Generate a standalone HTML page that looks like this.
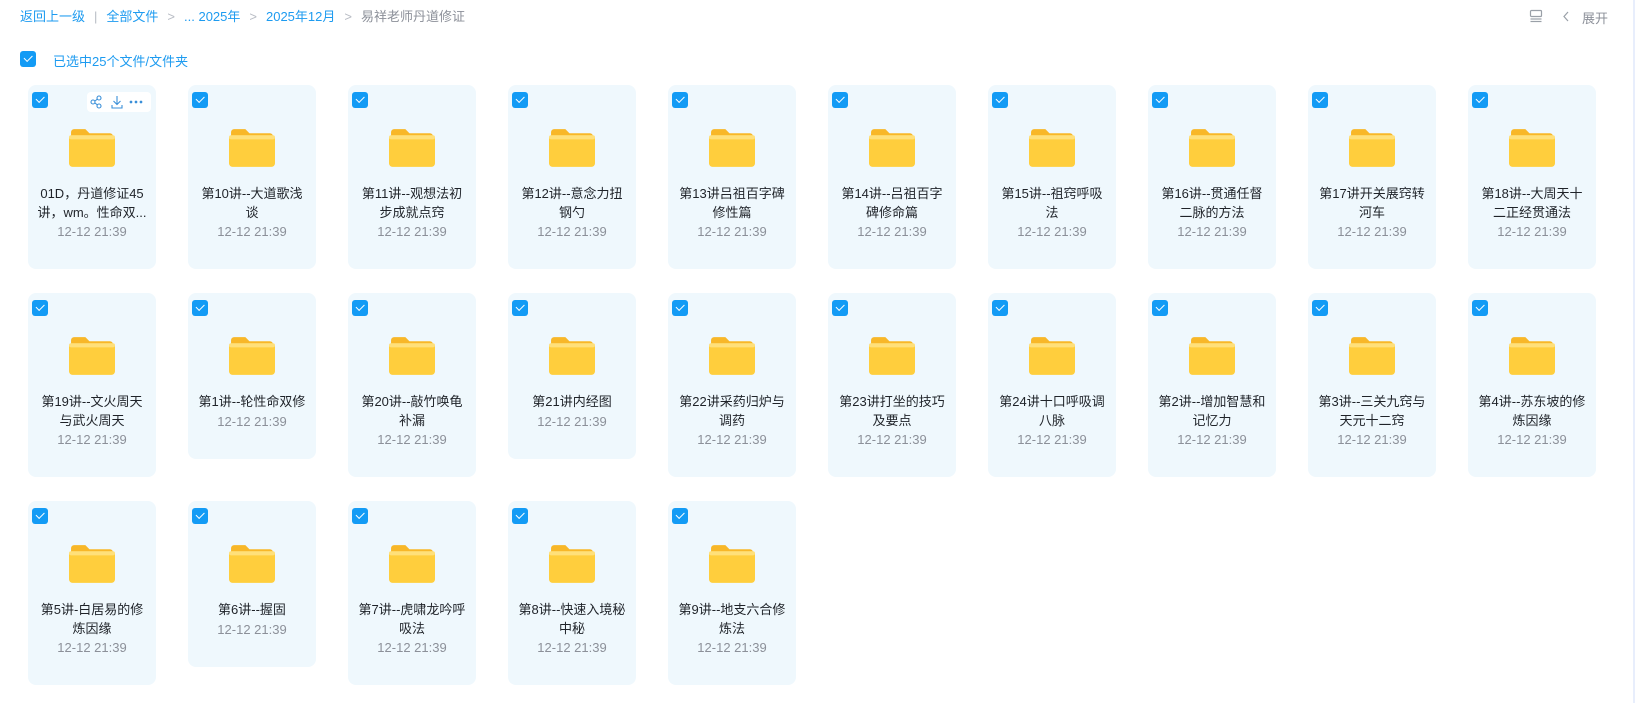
<!DOCTYPE html>
<html><head><meta charset="utf-8"><style>
*{margin:0;padding:0;box-sizing:border-box}
body{width:1635px;height:703px;background:#fff;font-family:"Liberation Sans","Noto Sans CJK SC",sans-serif;position:relative;overflow:hidden;border-right:2px solid #e8eefc}
.bc{position:absolute;top:8px;left:20px;font-size:13px;color:#1d9bf0;white-space:nowrap;line-height:17px}
.bc .g{color:#b8bcc4;margin:0 9px}
.bc .c{color:#8c9099}
.cb{position:absolute;width:16px;height:16px;border-radius:3px;background:#139bf5}
.cb:after{content:"";position:absolute;left:4px;top:4px;width:7px;height:3.5px;border-left:1.5px solid #fff;border-bottom:1.5px solid #fff;transform:rotate(-45deg)}
.sel{position:absolute;left:53px;top:51px;font-size:13px;color:#1d9bf0}
.card{position:absolute;width:128px;background:#eff8fd;border-radius:8px}
.card .cb{left:4px;top:7px}
.fold{position:absolute;left:41px;top:42px;width:46px;height:41px}
.nm{position:absolute;top:100px;left:3px;right:3px;text-align:center;font-size:13px;line-height:18.5px;color:#1f2329}
.dt{text-align:center;font-size:13px;color:#8c9099;line-height:20px}
.tools{position:absolute;right:5px;top:7px;background:#fff;border-radius:4px;width:64px;height:20px}
</style></head><body>
<div class="bc">返回上一级<span class="g">|</span>全部文件<span class="g">&gt;</span>... 2025年<span class="g">&gt;</span>2025年12月<span class="g">&gt;</span><span class="c">易祥老师丹道修证</span></div>
<svg style="position:absolute;left:1529px;top:9px" width="14" height="14" viewBox="0 0 14 14" fill="none" stroke="#9aa0a8" stroke-width="1.2"><rect x="1.5" y="1.5" width="11" height="6" rx="1"/><line x1="1.5" y1="10" x2="12.5" y2="10"/><line x1="1.5" y1="12.5" x2="12.5" y2="12.5"/></svg>
<svg style="position:absolute;left:1562px;top:11px" width="8" height="11" viewBox="0 0 8 11" fill="none" stroke="#9aa0a8" stroke-width="1.2"><path d="M6 1 L2 5.5 L6 10"/></svg>
<div style="position:absolute;left:1582px;top:8px;font-size:13px;color:#8c9099">展开</div>
<div class="cb" style="left:20px;top:51px"></div>
<div class="sel">已选中25个文件/文件夹</div>
<div id="g"></div>
<script>
var names=[["01D，丹道修证45","讲，wm。性命双..."],["第10讲--大道歌浅","谈"],["第11讲--观想法初","步成就点窍"],["第12讲--意念力扭","钢勺"],["第13讲吕祖百字碑","修性篇"],["第14讲--吕祖百字","碑修命篇"],["第15讲--祖窍呼吸","法"],["第16讲--贯通任督","二脉的方法"],["第17讲开关展窍转","河车"],["第18讲--大周天十","二正经贯通法"],
["第19讲--文火周天","与武火周天"],["第1讲--轮性命双修"],["第20讲--敲竹唤龟","补漏"],["第21讲内经图"],["第22讲采药归炉与","调药"],["第23讲打坐的技巧","及要点"],["第24讲十口呼吸调","八脉"],["第2讲--增加智慧和","记忆力"],["第3讲--三关九窍与","天元十二窍"],["第4讲--苏东坡的修","炼因缘"],
["第5讲-白居易的修","炼因缘"],["第6讲--握固"],["第7讲--虎啸龙吟呼","吸法"],["第8讲--快速入境秘","中秘"],["第9讲--地支六合修","炼法"]];
var tops=[85,293,501],h="";
var fold='<svg class="fold" viewBox="0 0 45 38"><path d="M2 4a3 3 0 0 1 3-3h11l4 4h20a3 3 0 0 1 3 3v4H2z" fill="#f8b728"/><rect x="0" y="7" width="45" height="31" rx="3.5" fill="#ffce3d"/><rect x="0" y="7" width="45" height="4" rx="2" fill="#ffe07a"/></svg>';
names.forEach(function(n,i){var r=Math.floor(i/10),c=i%10;var x=28+c*160,y=tops[r];var ht=n.length==1?166:184;
h+='<div class="card" style="left:'+x+'px;top:'+y+'px;height:'+ht+'px"><div class="cb"></div>'+fold+'<div class="nm">'+n.join("<br>")+'<div class="dt">12-12 21:39</div></div>'+(i==0?'<div class="tools"><svg width="64" height="20" viewBox="0 0 64 20" fill="none" stroke="#3a8fd8" stroke-width="1.1"><circle cx="6" cy="10" r="2"/><circle cx="12" cy="6" r="2"/><circle cx="12" cy="14" r="2"/><path d="M8 9l2.5-2M8 11l2.5 2"/><path d="M30 4v8M26.5 9l3.5 3.5 3.5-3.5M25 13v3h10v-3"/><circle cx="44" cy="10" r=".8" fill="#3a8fd8"/><circle cx="49" cy="10" r=".8" fill="#3a8fd8"/><circle cx="54" cy="10" r=".8" fill="#3a8fd8"/></svg></div>':'')+'</div>';});
document.getElementById("g").innerHTML=h;
</script>
</body></html>
